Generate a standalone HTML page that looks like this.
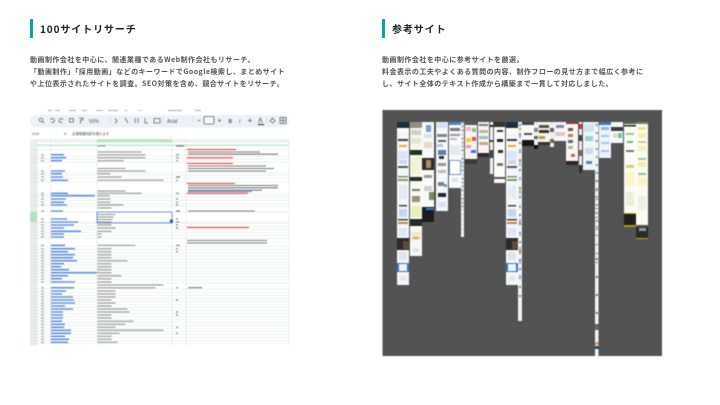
<!DOCTYPE html>
<html lang="ja">
<head>
<meta charset="utf-8">
<title>100サイトリサーチ / 参考サイト</title>
<style>
html,body{margin:0;padding:0;background:#fff;}
body{position:relative;width:720px;height:405px;overflow:hidden;font-family:"Noto Sans CJK JP","Liberation Sans",sans-serif;color:#333;}
.bar{position:absolute;top:19px;width:3px;height:19px;background:#0aa3a8;}
h2{position:absolute;top:21px;margin:0;font-size:10px;line-height:15px;font-weight:700;letter-spacing:.9px;color:#222;white-space:nowrap;}
p{position:absolute;top:54px;margin:0;font-size:7px;line-height:12px;font-weight:700;letter-spacing:.47px;color:#555;white-space:nowrap;}
svg{position:absolute;display:block;}
</style>
</head>
<body>
<div class="bar" style="left:30px"></div>
<h2 style="left:40px">100サイトリサーチ</h2>
<p style="left:30px">動画制作会社を中心に、関連業種であるWeb制作会社もリサーチ。<br>「動画制作」「採用動画」などのキーワードでGoogle検索し、まとめサイト<br>や上位表示されたサイトを調査。SEO対策を含め、競合サイトをリサーチ。</p>

<div class="bar" style="left:382px"></div>
<h2 style="left:392px">参考サイト</h2>
<p style="left:382px">動画制作会社を中心に参考サイトを厳選。<br>料金表示の工夫やよくある質問の内容、制作フローの見せ方まで幅広く参考に<br>し、サイト全体のテキスト作成から構築まで一貫して対応しました。</p>

<!-- spreadsheet -->
<svg style="left:0;top:0;filter:blur(.45px)" width="720" height="405" viewBox="0 0 720 405">
<rect x="30" y="115" width="259" height="12.500" rx="6" fill="#eef2f8"/>
<g font-family="Liberation Sans,sans-serif" font-size="5" fill="#555">
<text x="89" y="122.800">50%</text><text x="167" y="122.800" font-size="5.200">Arial</text>
<text x="206.500" y="122.800" font-size="4.500">10</text>
<text x="228.500" y="122.800" font-weight="700">B</text><text x="239" y="122.800" font-style="italic">I</text>
<text x="32" y="135" font-size="3.800">D16</text>
<text x="72" y="135" font-size="3.500" font-family="Noto Sans CJK JP,sans-serif">企業概要&amp;新作遅れます</text>
<text x="64" y="135" font-size="3.500" font-style="italic">fx</text>
</g>
<g fill="none" stroke="#666" stroke-width=".8">
<circle cx="41" cy="120" r="1.800"/><path d="M42.300 121.300l1.800 1.800"/>
<path d="M50.500 120a2 2 0 1 1 .8 2.200M63 120a2 2 0 1 0-.8 2.200"/>
<rect x="69.500" y="118.500" width="4" height="3.500"/><path d="M79 118h4v1.800h-2.500v3.700"/>
<path d="M115 118.500l2 2.500-2 2.500M125 118l3 5M135 118v5M138 118v5M145 118v5h3M154 118.500h6v4.500h-6z"/>
<rect x="204" y="116.500" width="10" height="7.500" rx="1" fill="#f8fafd"/>
<path d="M197.500 120.500h3M218 120.500h3M219.500 119v3"/><path d="M248 120.500h4M250 118.500v4"/>
<path d="M258.500 123l1.800-5 1.800 5M270 121l2.500-3 2.500 3-2.500 2zM280 117.500h6v6h-6zM280 120.500h6M283 117.500v6"/>
</g>
<rect x="258" y="124" width="6" height="1.100" fill="#333"/>
<path d="M163 117v6M193 117v6M110 117v6M267 117v6" stroke="#c8ccd4" stroke-width=".5"/>
<g fill="#999" opacity=".8">
<rect x="48" y="110" width="4" height="1"/><rect x="55" y="110" width="5" height="1"/><rect x="69" y="110" width="7" height="1"/><rect x="82" y="110" width="5" height="1"/><rect x="96" y="110" width="7" height="1"/><rect x="108" y="110" width="10" height="1"/><rect x="125" y="110" width="2" height="1"/><rect x="139" y="110" width="2" height="1"/><rect x="168" y="110" width="14" height="1"/><rect x="195" y="110" width="6" height="1"/>
</g>
<!-- headers -->
<rect x="30" y="139" width="259" height="3.500" fill="#eef1f0"/>
<rect x="97" y="139" width="75" height="3.500" fill="#bfe4c8"/>
<rect x="30" y="144.500" width="259" height="1.400" fill="#bfe4c8"/>
<rect x="30" y="142.500" width="7" height="203" fill="#e8efea"/>
<rect x="30" y="212" width="7" height="10" fill="#b5e0be"/>
<!-- grid -->
<g stroke="#d3d8d8" stroke-width=".4" fill="none">
<path d="M37 139v206M50.500 139v206M97 139v206M172 139v206M186 139v206M289 139v206"/>
<path d="M30 150H289M30 156H289M30 159H289M30 162H289M30 172.500H289M30 175H289M30 178.500H289M30 182H289M30 194.500H289M30 197H289M30 200.500H289M30 204H289M30 206.500H289M30 212H289M30 222H289M30 223.500H289M30 226.500H289M30 229.500H289M30 232.500H289M30 235.500H289M30 238.500H289M30 246.500H289M30 250H289M30 253H289M30 256H289M30 259H289M30 262H289M30 265H289M30 268H289M30 271H289M30 274H289M30 277H289M30 280H289M30 283H289M30 289H289M30 292.500H289M30 295.500H289M30 298.500H289M30 301.500H289M30 304.500H289M30 307.500H289M30 310.500H289M30 313.500H289M30 316.500H289M30 319.500H289M30 322.500H289M30 325.500H289M30 328.500H289M30 331.500H289M30 334.500H289M30 337.500H289M30 340.500H289M30 343.500H289"/>
</g>
<!-- url column -->
<path fill="none" stroke="#4f86e0" stroke-width="1.300" d="M51 154.700h13M51 157.700h15M51 160.700h11M51 171h14M51 173.700h11M51 177h12M51 180.300h17M51 193.300h17M51 195.700h44M51 199h15M51 202.300h13M51 205h16M51 211h12M51 219h16M51 222h27M51 225h23M51 228h13M51 231.300h30M51 234h13M51 237h13M51 245.300h14M51 248.700h24M51 251.700h17M51 254.700h24M51 257.700h22M51 260.700h26M51 263.700h13M51 266.700h10M51 269.700h18M51 272.700h46M51 275.700h17M51 278.700h11M51 282h24M51 287.700h23M51 291h15M51 294h11M51 297h22M51 300h23M51 303h24M51 306h14M51 309h22M51 312h12M51 315h12M51 318h12M51 321.300h11M51 324.300h14M51 327.300h13M51 330.300h20M51 333.300h20M51 336.300h14M51 339.300h18M51 342.300h17"/>
<!-- number / description columns -->
<path fill="none" stroke="#999" stroke-width="1" d="M41 154.700h3M41 157.700h3M41 160.700h3M41 171h3M41 173.700h3M41 177h3M41 180.300h3M41 193.300h3M41 195.700h3M41 199h3M41 202.300h3M41 205h3M41 211h3M41 219h3M41 222h3M41 225h3M41 228h3M41 231.300h3M41 234h3M41 237h3M41 245.300h3M41 248.700h3M41 251.700h3M41 254.700h3M41 257.700h3M41 260.700h3M41 263.700h3M41 266.700h3M41 269.700h3M41 272.700h3M41 275.700h3M41 278.700h3M41 282h3M41 287.700h3M41 291h3M41 294h3M41 297h3M41 300h3M41 303h3M41 306h3M41 309h3M41 312h3M41 315h3M41 318h3M41 321.300h3M41 324.300h3M41 327.300h3M41 330.300h3M41 333.300h3M41 336.300h3M41 339.300h3M41 342.300h3"/>
<path fill="none" stroke="#8e8e8e" stroke-width="1" d="M97.500 146h8M97.500 152h44M97.500 154.700h48M97.500 157.700h48M97.500 160.700h26M97.500 168.500h28M97.500 171h48M97.500 173.700h13M97.500 177h24M97.500 180.300h66M97.500 191h28M97.500 193.300h44M97.500 195.700h12M97.500 199h13M97.500 202.300h13M97.500 205h26M97.500 208h14M97.500 214.500h18M97.500 217h16M97.500 219.500h15M97.500 222h14M97.500 225h14M97.500 228h18M97.500 231.300h14M97.500 234h4M97.500 237h4M97.500 245.300h38M97.500 248.700h14M97.500 251.700h14M97.500 254.700h14M97.500 257.700h14M97.500 260.700h30M97.500 263.700h14M97.500 266.700h14M97.500 269.700h14M97.500 272.700h14M97.500 275.700h24M97.500 278.700h14M97.500 282h14M97.500 285h66M97.500 287.700h58M97.500 291h18M97.500 294h18M97.500 297h18M97.500 300h14M97.500 303h18M97.500 306h14M97.500 309h30M97.500 312h32M97.500 315h14M97.500 318h14M97.500 321.300h36M97.500 324.300h28M97.500 327.300h18M97.500 330.300h66M97.500 333.300h22M97.500 336.300h14M97.500 339.300h14M97.500 342.300h20"/>
<path fill="none" stroke="#666" stroke-width=".9" d="M176 146h8M176 154.700h3M176 157.700h3M176 160.700h2M176 177h4M176 180.300h2M176 193.300h3M176 199h2M176 202.300h2M176 205h2M176 211h4M176 219h2M176 222h3M176 225h2M176 228h2M176 245.300h4M176 248.700h2M176 251.700h2M176 287.700h2M176 300h2M176 312h2M176 315h2M176 327.300h2M176 333.300h2"/>
<!-- notes column -->
<path fill="none" stroke="#e8332e" stroke-width="1" d="M187 149.500h49M187 157.700h46M187 163.500h46M187 183.500h48M187 193.300h61M187 227.500h62"/>
<path fill="none" stroke="#555" stroke-width=".8" d="M188 152h72M188 154.200h90M188 166h78M188 168.500h86M188 171h78M188 185.500h90M188 187.800h90M188 190.200h74M188 211h67M187 240.500h80M187 243h80M188 287.700h14"/>
<path fill="none" stroke="#4c7fd6" stroke-width=".9" d="M188 191.500h64"/>
<!-- selection -->
<rect x="97" y="212" width="75" height="11" fill="none" stroke="#4d7fd0" stroke-width=".8"/>
<rect x="170" y="219.500" width="3" height="3" fill="#1a56c4"/>
<rect x="100" y="346" width="190" height="6" fill="#fff"/>
</svg>

<!-- reference sites panel -->
<svg style="left:0;top:0;filter:blur(.45px)" width="720" height="405" viewBox="0 0 720 405">
<rect x="382.500" y="110" width="279.500" height="246" fill="#535353"/>
<g id="lp">
<rect x="397" y="122" width="12" height="163" fill="#f4f6f8"/>
<rect x="397" y="122" width="12" height="6" fill="#1f2d38"/>
<rect x="397" y="128" width="12" height="4" fill="#fff"/>
<rect x="398" y="139" width="10" height="2" fill="#3b3b3b"/>
<rect x="399" y="145" width="8" height="2" fill="#f0a83c"/>
<rect x="398" y="151" width="10" height="8" fill="#dbe6f5"/>
<rect x="399" y="160" width="8" height="4" fill="#c6d7ee"/>
<rect x="398" y="166" width="10" height="2" fill="#555"/>
<rect x="398" y="176" width="10" height="1.500" fill="#888"/>
<rect x="398" y="179" width="10" height="2" fill="#7ba05b"/>
<rect x="399" y="185" width="8" height="14" fill="#e8ebf0"/>
<rect x="399" y="205" width="8" height="1.500" fill="#444"/>
<rect x="399" y="209" width="8" height="8" fill="#c5d6ef"/>
<rect x="398" y="219" width="10" height="1.500" fill="#444"/>
<rect x="398" y="222" width="10" height="2" fill="#b98a4d"/>
<rect x="399" y="228" width="8" height="8" fill="#dce7f6"/>
<rect x="397" y="238" width="12" height="12" fill="#2e2a28"/>
<rect x="403" y="241" width="6" height="8" fill="#5e4b38"/>
<rect x="399" y="252" width="8" height="8" fill="#dfe3ea"/>
<rect x="397" y="263" width="12" height="9" fill="#3f74b4"/>
<rect x="399" y="264" width="8" height="7" fill="#eef3fa"/>
<rect x="400" y="276" width="6" height="5" fill="#e4e7ec"/>
</g>
<use href="#lp" x="109"/>
<!-- col 2 -->
<rect x="410" y="122" width="12" height="134" fill="#f8f8f2"/>
<rect x="410" y="122" width="12" height="6" fill="#8f9188"/>
<rect x="411" y="130" width="10" height="5" fill="#cfd0c8"/>
<rect x="411" y="138" width="10" height="6" fill="#e9e4d6"/>
<rect x="410" y="150" width="12" height="5" fill="#23321f"/>
<rect x="411" y="157" width="10" height="17" fill="#f0f3d8"/>
<rect x="410" y="177" width="12" height="4" fill="#27331f"/>
<rect x="412" y="189" width="8" height="2" fill="#777"/>
<rect x="412" y="196" width="8" height="6" fill="#998f7e"/>
<rect x="411" y="206" width="10" height="11" fill="#e9efbd"/>
<rect x="410" y="219" width="12" height="7" fill="#252d22"/>
<rect x="411" y="232" width="10" height="8" fill="#ece9d8"/>
<rect x="413" y="237" width="6" height="2" fill="#e9a34d"/>
<rect x="413" y="248" width="6" height="4" fill="#dde5f2"/>
<!-- col 3 -->
<rect x="422" y="122" width="12" height="100" fill="#f8f9fa"/>
<rect x="426" y="125" width="5" height="7" fill="#7b9fcb"/>
<rect x="424" y="134" width="8" height="4" fill="#d9e2ef"/>
<rect x="424" y="142" width="8" height="6" fill="#e8dcc9"/>
<rect x="422" y="158" width="12" height="12" fill="#2d2b2a"/>
<rect x="426" y="160" width="5" height="8" fill="#b08a66"/>
<rect x="424" y="175" width="8" height="3" fill="#9a9a9a"/>
<rect x="424" y="186" width="8" height="5" fill="#cfcfcf"/>
<rect x="429" y="192" width="5" height="8" fill="#7d8a60"/>
<rect x="422" y="207" width="12" height="15" fill="#1c1c1c"/>
<rect x="426" y="208" width="8" height="2" fill="#2f7ed8"/>
<!-- col 4 -->
<rect x="436" y="122" width="12" height="89" fill="#f5f7fb"/>
<rect x="437" y="123" width="10" height="5" fill="#cfe0f5"/>
<rect x="437" y="134" width="10" height="3" fill="#888"/>
<rect x="438" y="140" width="8" height="2" fill="#666"/>
<rect x="437" y="144" width="6" height="3" fill="#bcc6d4"/>
<rect x="438" y="150" width="8" height="5" fill="#5d7fa8"/>
<rect x="439" y="156" width="5" height="3" fill="#333"/>
<rect x="438" y="163" width="8" height="3" fill="#999"/>
<rect x="438" y="170" width="8" height="3" fill="#bbb"/>
<rect x="438" y="182" width="6" height="4" fill="#87827a"/>
<rect x="444" y="184" width="3" height="3" fill="#6c96d8"/>
<rect x="438" y="193" width="8" height="4" fill="#223"/>
<rect x="438" y="202" width="8" height="5" fill="#d8e3f2"/>
<!-- col 5 -->
<rect x="449" y="122" width="12" height="66" fill="#f7f9fb"/>
<rect x="449" y="122" width="12" height="3" fill="#4d85c9"/>
<rect x="450" y="128" width="10" height="3" fill="#778"/>
<rect x="450" y="134" width="10" height="2" fill="#999"/>
<rect x="450" y="138" width="7" height="2" fill="#bbb"/>
<rect x="450" y="145" width="10" height="10" fill="#e6e8ec"/>
<rect x="449" y="160" width="12" height="15" fill="#6f9bd2"/>
<rect x="450" y="161" width="10" height="13" fill="#fff"/>
<rect x="452" y="178" width="6" height="4" fill="#dde3ea"/>
<!-- col 6 -->
<rect x="461" y="122" width="3" height="115" fill="#f2f3f4"/>
<path stroke="#4f5a66" stroke-width="1.500" stroke-dasharray="1 3" d="M462.500 122v88"/>
<path stroke="#c0c8d2" stroke-width="1.500" stroke-dasharray="1 4" d="M462.500 124v110"/>
<!-- col 7 -->
<rect x="465" y="122" width="12" height="42" fill="#f6f3f2"/>
<rect x="465" y="122" width="12" height="3" fill="#575757"/>
<rect x="466" y="127" width="5" height="4" fill="#f4b8c0"/>
<rect x="472" y="128" width="4" height="4" fill="#8fbf7f"/>
<rect x="466" y="138" width="5" height="4" fill="#f3d12e"/>
<rect x="472" y="137" width="4" height="4" fill="#d9534f"/>
<rect x="466" y="145" width="5" height="3" fill="#e69aa5"/>
<rect x="471" y="150" width="5" height="3" fill="#3f78d0"/>
<rect x="465" y="159" width="12" height="5" fill="#3a3a3a"/>
<!-- col 8 -->
<rect x="478" y="122" width="11" height="34" fill="#f5f6f4"/>
<rect x="479" y="124" width="9" height="2" fill="#7b7b6f"/>
<rect x="479" y="130" width="9" height="3" fill="#c3b69a"/>
<rect x="479" y="136" width="9" height="3" fill="#a9b7c8"/>
<rect x="479" y="142" width="9" height="3" fill="#c8a988"/>
<rect x="478" y="153" width="11" height="4" fill="#2c2c2c"/>
<!-- col 9 -->
<rect x="490" y="122" width="3" height="52" fill="#f4f4f4"/>
<rect x="490" y="125" width="3" height="2" fill="#222"/><rect x="490" y="140" width="3" height="2" fill="#444"/><rect x="490" y="150" width="3" height="8" fill="#444"/>
<!-- col 10 -->
<rect x="494" y="122" width="11" height="61" fill="#fbfbfb"/>
<rect x="494" y="122" width="11" height="5" fill="#333"/>
<rect x="497" y="130" width="6" height="2" fill="#333"/>
<rect x="497" y="139" width="6" height="3" fill="#222"/>
<rect x="498" y="150" width="5" height="3" fill="#333"/>
<rect x="497" y="163" width="6" height="3" fill="#777"/>
<rect x="494" y="177" width="11" height="2" fill="#555"/>
<!-- col 12 -->
<rect x="518" y="122" width="4" height="199" fill="#f2f3f5"/>
<path stroke="#7d8ea5" stroke-width="2" stroke-dasharray="2 7" d="M520 124v180"/>
<path stroke="#d08a3a" stroke-width="2" stroke-dasharray="2 29" d="M520 128v130"/>
<path stroke="#9ab3d6" stroke-width="2" stroke-dasharray="3 11" d="M520 135v145"/>
<!-- col 13-16 -->
<rect x="522" y="122" width="12" height="18" fill="#f8f8f8"/>
<rect x="522" y="122" width="12" height="3" fill="#444"/>
<rect x="524" y="133" width="8" height="2" fill="#555"/>
<rect x="522" y="140" width="12" height="6" fill="#151515"/>
<rect x="534" y="122" width="4" height="27" fill="#eef0ee"/>
<rect x="534" y="128" width="4" height="4" fill="#888"/>
<rect x="534" y="136" width="4" height="3" fill="#5c6f66"/>
<rect x="534" y="145" width="4" height="4" fill="#111"/>
<rect x="538" y="122" width="12" height="23" fill="#f5f3ee"/>
<rect x="539" y="125" width="10" height="3" fill="#5b5142"/>
<rect x="539" y="130" width="10" height="3" fill="#36352f"/>
<rect x="539" y="136" width="6" height="3" fill="#c29a46"/>
<rect x="538" y="142" width="12" height="3" fill="#333"/>
<rect x="550" y="122" width="4" height="25" fill="#eee"/>
<rect x="550" y="128" width="4" height="4" fill="#666"/>
<rect x="550" y="139" width="4" height="4" fill="#7a6b48"/>
<!-- col 17-20 -->
<rect x="554" y="122" width="12" height="19" fill="#fbf4f5"/>
<rect x="556" y="125" width="8" height="3" fill="#7d8f9e"/>
<rect x="555" y="132" width="10" height="4" fill="#d9c9cf"/>
<rect x="566" y="122" width="12" height="43" fill="#f7f6f4"/>
<rect x="566" y="122" width="12" height="2" fill="#8a3a3a"/>
<rect x="568" y="128" width="5" height="3" fill="#6b5a48"/>
<rect x="568" y="134" width="5" height="3" fill="#a58a5f"/>
<rect x="568" y="140" width="5" height="3" fill="#5a6b7d"/>
<rect x="568" y="146" width="5" height="3" fill="#b9b09c"/>
<rect x="571" y="154" width="4" height="3" fill="#c46a5b"/>
<rect x="566" y="161" width="12" height="4" fill="#30241f"/>
<rect x="579" y="122" width="3" height="51" fill="#ececec"/>
<rect x="579" y="124" width="3" height="5" fill="#c33"/>
<rect x="579" y="135" width="3" height="6" fill="#444"/>
<rect x="579" y="150" width="3" height="6" fill="#7d6a5a"/>
<rect x="579" y="165" width="3" height="8" fill="#3a2a25"/>
<rect x="583" y="122" width="12" height="48" fill="#f0f6f8"/>
<rect x="584" y="124" width="10" height="8" fill="#cfe6ea"/>
<rect x="585" y="136" width="8" height="5" fill="#9fd0da"/>
<rect x="585" y="148" width="8" height="6" fill="#cbdbe8"/>
<rect x="586" y="161" width="6" height="3" fill="#5c87a8"/>
<!-- col 21 -->
<rect x="595" y="122" width="3.500" height="234" fill="#f2f4f5"/>
<path stroke="#6f9fb0" stroke-width="2" stroke-dasharray="2 6" d="M596.800 124v110"/>
<path stroke="#66707f" stroke-width="2" stroke-dasharray="1 8" d="M596.800 181v90"/>
<path stroke="#b9524f" stroke-width="2" stroke-dasharray="2 16" d="M596.800 258v72"/>
<rect x="595" y="324" width="3.500" height="6" fill="#666"/>
<rect x="595" y="346" width="3.500" height="3" fill="#1c4a85"/>
<rect x="595" y="342" width="3.500" height="3" fill="#e0a564"/>
<!-- col 22-23 -->
<rect x="599" y="122" width="12" height="36" fill="#eef4fb"/>
<rect x="599" y="122" width="12" height="3" fill="#3e78bd"/>
<rect x="601" y="127" width="8" height="3" fill="#90b6e2"/>
<rect x="601" y="135" width="8" height="2" fill="#a7c4e6"/>
<rect x="601" y="142" width="8" height="2" fill="#a7c4e6"/>
<rect x="601" y="150" width="8" height="2" fill="#a7c4e6"/>
<rect x="611" y="122" width="12" height="21" fill="#fafafa"/>
<rect x="611" y="127" width="12" height="4" fill="#3b3f45"/>
<rect x="613" y="133" width="4" height="5" fill="#e3dfa8"/>
<rect x="618" y="133" width="4" height="5" fill="#6bc2b8"/>
<!-- col 24-25 -->
<rect x="624" y="122" width="12" height="91" fill="#fcfcf6"/>
<rect x="624" y="122" width="12" height="2" fill="#4a6a4a"/>
<rect x="624" y="125" width="12" height="1.500" fill="#222"/>
<rect x="626" y="133" width="8" height="2" fill="#a9c97d"/>
<rect x="627" y="141" width="6" height="2" fill="#69b889"/>
<rect x="626" y="150" width="8" height="2" fill="#777"/>
<rect x="626" y="165" width="8" height="3" fill="#ded070"/>
<rect x="626" y="172" width="8" height="14" fill="#fbf5c8"/>
<rect x="626" y="192" width="8" height="14" fill="#eeeedd"/>
<rect x="624" y="213" width="12" height="14" fill="#1f1f1c"/>
<rect x="624" y="213" width="12" height="1" fill="#b5a51f"/>
<rect x="624" y="225" width="12" height="2" fill="#a89a1d"/>
<rect x="636" y="122" width="12" height="103" fill="#fbfbf3"/>
<rect x="636" y="122" width="12" height="2" fill="#6a8a5a"/>
<rect x="638" y="127" width="8" height="3" fill="#f0e487"/>
<rect x="638" y="133" width="8" height="5" fill="#f6efb8"/>
<rect x="638" y="141" width="8" height="2" fill="#c8d48a"/>
<rect x="638" y="146" width="8" height="5" fill="#f6efb8"/>
<rect x="638" y="158" width="8" height="2" fill="#9fc79c"/>
<rect x="638" y="162" width="8" height="5" fill="#f3eeb0"/>
<rect x="638" y="173" width="8" height="2" fill="#a0b8a0"/>
<rect x="638" y="177" width="8" height="8" fill="#f8f3cb"/>
<rect x="638" y="196" width="8" height="14" fill="#efefe3"/>
<rect x="636" y="227" width="12" height="12" fill="#2a2a28"/>
<rect x="639" y="228" width="7" height="3" fill="#7fa89a"/>
<rect x="636" y="238" width="12" height="1" fill="#b5a51f"/>
</svg>
</body>
</html>
